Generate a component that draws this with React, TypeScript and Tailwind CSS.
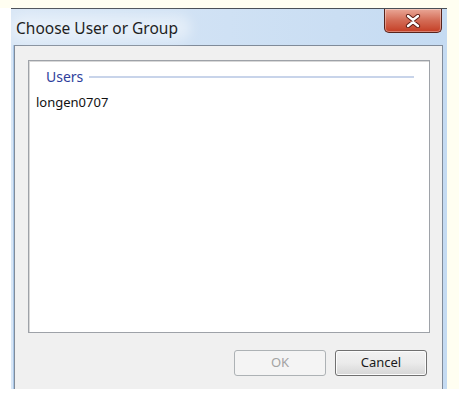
import React from "react";

function CloseIcon() {
  return (
    <svg width="16" height="14" viewBox="0 0 16 14">
      <path
        d="M3 2 L8 6 L13 2 M3 12 L8 8 L13 12"
        stroke="#5a1c14"
        strokeWidth="4.2"
        strokeLinecap="round"
        fill="none"
      />
      <path
        d="M3 2 L8 6 L13 2 M3 12 L8 8 L13 12"
        stroke="#ffffff"
        strokeWidth="2.4"
        strokeLinecap="round"
        fill="none"
      />
    </svg>
  );
}

export default function App() {
  const font = { fontFamily: '"Noto Sans", "Open Sans", Arial, sans-serif' };
  return (
    <div className="w-[459px] h-[396px] bg-white flex flex-col overflow-hidden" style={font}>
      <div className="h-[8px] bg-[#fffef1] shrink-0" />
      <div className="flex h-[381px] shrink-0">
        <div className="w-[11px] bg-white shrink-0" />
        <div className="w-[436px] shrink-0 flex flex-col border-t border-[#4a4f56] bg-gradient-to-r from-[#d9e7f6] via-[#cfe1f4] to-[#c5dbf2]">
          <div className="h-[36px] shrink-0 flex items-start relative">
            <div className="absolute left-[0px] top-[6px] w-[180px] h-[26px] rounded-full bg-white/40 blur-[6px]" />
            <span className="relative ml-[5px] mt-[9px] text-[15.5px] leading-[20px] text-[#1e1e1e]">
              Choose User or Group
            </span>
            <div className="ml-auto mr-[5px] w-[58px] h-[24px] rounded-b-[5px] border border-t-0 border-[#57231b] bg-gradient-to-b from-[#e9a797] via-[#d36b55] to-[#c43c22] flex items-center justify-center shadow-[inset_0_0_0_1px_rgba(255,255,255,0.35)]">
              <CloseIcon />
            </div>
          </div>
          <div className="flex flex-1 pl-[2px] pr-[4px]">
            <div className="w-[1px] bg-[#a9c6e6]" />
            <div className="flex-1 flex flex-col bg-[#f0f0f0] border border-b-0 border-[#808b99]">
              <div className="mt-[14px] ml-[13px] w-[402px] h-[273px] border border-[#9ea2a8] bg-white shadow-[inset_1px_1px_0_#d8d8d8] flex flex-col">
                <div className="flex items-center mt-[6px] ml-[17px] mr-[15px]">
                  <span className="text-[14px] leading-[20px] text-[#2e3e9c]">Users</span>
                  <div className="flex-1 h-[2px] ml-[6px] bg-[#c8d4ea]" />
                </div>
                <div className="ml-[7px] mt-[6px] text-[13px] leading-[18px] text-[#111]">longen0707</div>
              </div>
              <div className="flex justify-end gap-[9px] mt-[17px] pr-[15px]">
                <button className="w-[92px] h-[26px] rounded-[3px] border border-[#adb2b5] bg-[#f4f4f4] text-[13px] text-[#a3a3a3]">
                  OK
                </button>
                <button className="w-[92px] h-[26px] rounded-[3px] border border-[#707070] bg-gradient-to-b from-[#f2f2f2] via-[#ebebeb] to-[#d6d6d6] text-[13px] text-[#1a1a1a] shadow-[inset_0_0_0_1px_#fcfcfc]">
                  Cancel
                </button>
              </div>
            </div>
          </div>
        </div>
        <div className="flex-1 bg-[#fffef1]" />
      </div>
      <div className="flex-1 bg-white" />
    </div>
  );
}
